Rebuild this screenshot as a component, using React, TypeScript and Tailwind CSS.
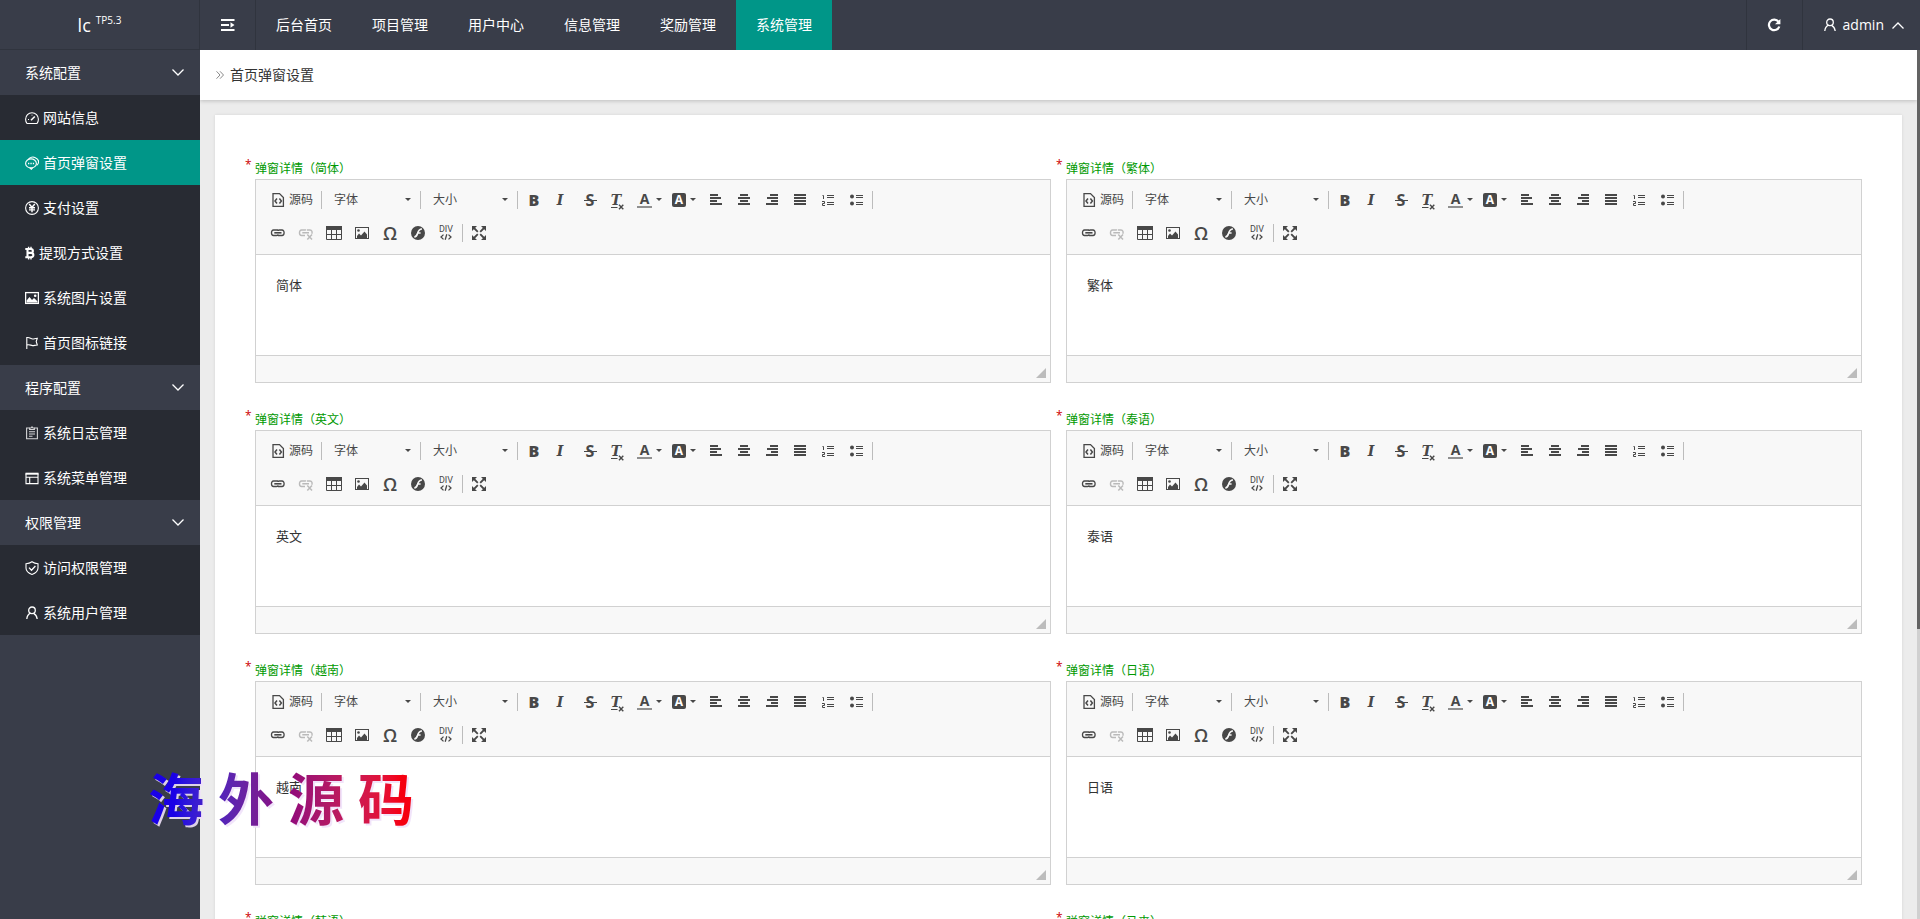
import React from "react";

type IconProps = { className?: string; viewBox?: string; children: React.ReactNode };

function Icon14({ className = "w-3.5", viewBox = "0 0 14 14", children }: IconProps) {
  return (
    <svg
      viewBox={viewBox}
      className={`h-3.5 shrink-0 ${className}`}
      fill="none"
      stroke="currentColor"
      strokeWidth="1.1"
      aria-hidden="true"
    >
      {children}
    </svg>
  );
}

function Icon16({ children }: { children: React.ReactNode }) {
  return (
    <svg viewBox="0 0 16 16" className="size-4 shrink-0" fill="none" stroke="currentColor" aria-hidden="true">
      {children}
    </svg>
  );
}

const icons = {
  gauge: (
    <Icon14>
      <path d="M2 12.5H12C13 11.300 13.400 9.700 13.400 8.200A6.400 6.400 0 0 0 .6 8.200C.6 9.700 1 11.300 2 12.500Z" />
      <path d="M6 9.300L9.800 5.500" strokeWidth="1.600" />
      <path d="M3 8.500H4M7 3.800V4.600" />
    </Icon14>
  ),
  chat: (
    <Icon14>
      <path d="M3.600 3.300C5 1.300 8 .6 10.300 1.700c2.600 1.200 3.800 3.600 2.900 5.700-.3.800-.8 1.400-1.500 1.800" />
      <ellipse cx="6" cy="7.400" rx="5.400" ry="4.500" />
      <path d="M4.500 11.700L6.300 13.300L7.800 11.700" />
      <path d="M3 7.500H4.300M5.400 7.500H6.700M7.800 7.500H9.100" strokeWidth="1.500" />
    </Icon14>
  ),
  yen: (
    <Icon14>
      <circle cx="7" cy="7" r="6.400" />
      <path d="M4.200 3L7 6.300L9.800 3M7 6.300V11.200M4 6.700H10M4 8.900H10" strokeWidth="1.400" />
    </Icon14>
  ),
  bitcoin: (
    <Icon14 className="w-2.5" viewBox="2 0 10 14">
      <path
        d="M4.500 3V11.200M2.300 3H7.800C10.600 3 10.600 6.900 7.800 6.900H4.500M7.800 6.900C11.200 6.900 11.200 11.200 8 11.200H2.300"
        strokeWidth="2.100"
      />
      <path d="M5.600 .8V3M8 .8V3M5.600 11V13.400M8 11V13.400" strokeWidth="1.400" />
    </Icon14>
  ),
  picture: (
    <Icon14>
      <rect x=".6" y="1.600" width="12.800" height="10.800" strokeWidth="1.300" />
      <path d="M1.600 11.600V9.500L4.500 6L7 9L9 7L12.400 10.200V11.600Z" fill="currentColor" stroke="none" />
      <circle cx="10.200" cy="4.700" r="1.300" fill="currentColor" stroke="none" />
    </Icon14>
  ),
  flag: (
    <Icon14>
      <path d="M1.800 1V13M1.800 1.700C4.500.8 6 3.400 8 3C9.700 2.700 10.800 2.300 12.300 2.300L11.200 5.500L12.300 9C10 9 9 9.800 7.500 9.600C5.500 9.300 4 8 1.800 9" />
    </Icon14>
  ),
  log: (
    <Icon14 className="w-3.5 opacity-80">
      <path d="M4.500 2H1.600V12.800H12.400V2H9.500" />
      <path d="M4.600 3.500V2H6L7 .8L8 2H9.400V3.500Z" />
      <path d="M4 5.800H10M4 8H10M4 10.200H7.500" />
    </Icon14>
  ),
  menu: (
    <Icon14>
      <path d="M1 2.500V12.600H13V2.500" />
      <path d="M.5 2.700H13.500" strokeWidth="2" />
      <path d="M1 6.200H13M4.700 6.200V12.600" />
    </Icon14>
  ),
  shield: (
    <Icon14>
      <path d="M7 .7C8.800 2 10.800 2.600 13 2.700V7C13 10 10.500 12.200 7 13.400C3.500 12.200 1 10 1 7V2.700C3.200 2.600 5.200 2 7 .7Z" />
      <path d="M4 6.600L6.500 9.200L10.400 5" strokeWidth="1.300" />
    </Icon14>
  ),
  user: (
    <Icon14>
      <circle cx="7" cy="4.300" r="3.300" strokeWidth="1.300" />
      <path d="M5.600 7.200C3.400 8.200 2 10.200 1.800 13M8.600 7.400C10.300 8.200 11.800 10.200 12.200 13" strokeWidth="1.300" />
    </Icon14>
  ),
};

type MenuGroup = { title: string; items: { label: string; icon: keyof typeof icons; active?: boolean }[] };

const groups: MenuGroup[] = [
  {
    title: "系统配置",
    items: [
      { label: "网站信息", icon: "gauge" },
      { label: "首页弹窗设置", icon: "chat", active: true },
      { label: "支付设置", icon: "yen" },
      { label: "提现方式设置", icon: "bitcoin" },
      { label: "系统图片设置", icon: "picture" },
      { label: "首页图标链接", icon: "flag" },
    ],
  },
  {
    title: "程序配置",
    items: [
      { label: "系统日志管理", icon: "log" },
      { label: "系统菜单管理", icon: "menu" },
    ],
  },
  {
    title: "权限管理",
    items: [
      { label: "访问权限管理", icon: "shield" },
      { label: "系统用户管理", icon: "user" },
    ],
  },
];

const navItems = ["后台首页", "项目管理", "用户中心", "信息管理", "奖励管理", "系统管理"];

const languages = ["简体", "繁体", "英文", "泰语", "越南", "日语", "韩语", "马来"];

function ToolButton({ title, children, disabled }: { title: string; children: React.ReactNode; disabled?: boolean }) {
  return (
    <button
      type="button"
      title={title}
      aria-label={title}
      disabled={disabled}
      className="flex h-6 w-7 shrink-0 items-center justify-center disabled:opacity-35"
    >
      {children}
    </button>
  );
}

function Caret() {
  return (
    <svg viewBox="0 0 6 3" className="h-[3px] w-1.5 shrink-0" fill="currentColor" aria-hidden="true">
      <path d="M0 0H6L3 3Z" />
    </svg>
  );
}

function Separator() {
  return <span className="h-[18px] w-px shrink-0 bg-[#bcbcbc]" />;
}

function Combo({ label, className }: { label: string; className: string }) {
  return (
    <div className={`relative flex h-6 shrink-0 items-center ${className}`}>
      <select aria-label={label} className="h-6 w-full appearance-none bg-transparent pl-3 text-xs outline-none">
        <option>{label}</option>
      </select>
      <span className="pointer-events-none absolute right-[9px] flex">
        <Caret />
      </span>
    </div>
  );
}

function Lines({ rows }: { rows: [number, number][] }) {
  return (
    <Icon16>
      {rows.map(([x, w], i) => (
        <rect key={i} x={x} y={2 + i * 3} width={w} height="2" fill="currentColor" stroke="none" />
      ))}
    </Icon16>
  );
}

function Toolbar() {
  return (
    <div className="overflow-hidden border-b border-[#d1d1d1] bg-[#f8f8f8] px-2 pt-[3px] pb-[5px] text-[#484848]">
      <div className="flex h-[33px] items-center">
        <button type="button" className="flex h-6 w-[57px] shrink-0 items-center gap-[3px] pl-1.5 text-xs">
          <Icon16>
            <path d="M3 1.600H9.500L13.400 5.500V14.400H3Z" strokeWidth="1.300" />
            <path d="M7 6.500L5 9L7 11.500M9.400 6.500L11.400 9L9.400 11.500" strokeWidth="1.500" />
          </Icon16>
          <span className="whitespace-nowrap">源码</span>
        </button>
        <Separator />
        <Combo label="字体" className="w-[98px]" />
        <Separator />
        <Combo label="大小" className="w-24" />
        <Separator />
        <span className="w-0.5 shrink-0" />
        <ToolButton title="加粗">
          <span className="font-['Open_Sans',sans-serif] text-base font-extrabold">B</span>
        </ToolButton>
        <ToolButton title="倾斜">
          <span className="pr-1 font-['DejaVu_Serif',serif] text-sm font-bold italic">I</span>
        </ToolButton>
        <ToolButton title="删除线">
          <span className="relative flex font-['Open_Sans',sans-serif] text-base font-bold">
            S
            <span className="absolute top-1/2 -left-0.5 h-px w-[13px] bg-[#484848]" />
          </span>
        </ToolButton>
        <ToolButton title="清除格式">
          <span className="relative flex pr-1 font-['DejaVu_Serif',serif] text-sm leading-4 font-bold italic">
            T
            <svg viewBox="0 0 13 6" className="absolute -bottom-0.5 left-0 h-1.5 w-[13px]" stroke="currentColor" fill="none" aria-hidden="true">
              <path d="M0 3.500H6.500" />
              <path d="M8 .8L12.300 5.200M12.300 .8L8 5.200" strokeWidth="1.400" />
            </svg>
          </span>
        </ToolButton>
        <button type="button" aria-label="文本颜色" className="flex h-6 w-[35px] shrink-0 items-center gap-1 pl-[5px]">
          <span className="flex h-4 w-[15px] flex-col items-center justify-between border-b-2 border-[#909090] font-['Open_Sans',sans-serif] text-sm leading-[14px] font-bold">
            A
          </span>
          <Caret />
        </button>
        <button type="button" aria-label="背景颜色" className="flex h-6 w-[35px] shrink-0 items-center gap-1 pl-[5px]">
          <span className="flex h-3.5 w-3.5 items-center justify-center rounded-xs bg-[#484848] font-['Open_Sans',sans-serif] text-xs font-bold text-white">
            A
          </span>
          <Caret />
        </button>
        <ToolButton title="左对齐">
          <Lines rows={[[2, 8], [2, 11], [2, 7], [2, 12]]} />
        </ToolButton>
        <ToolButton title="居中">
          <Lines rows={[[4, 8], [2, 12], [4, 8], [2, 12]]} />
        </ToolButton>
        <ToolButton title="右对齐">
          <Lines rows={[[6, 8], [3, 11], [7, 7], [2, 12]]} />
        </ToolButton>
        <ToolButton title="两端对齐">
          <Lines rows={[[2, 12], [2, 12], [2, 12], [2, 12]]} />
        </ToolButton>
        <ToolButton title="编号列表">
          <Icon16>
            <path d="M7 3.500H14M7 5.500H14M7 10.500H14M7 12.500H14" />
            <path d="M2.500 3.500H3.500V7M2 9.500H4.500V11.500H2.500V13.500H5" />
          </Icon16>
        </ToolButton>
        <ToolButton title="项目列表">
          <Icon16>
            <path d="M8 3.500H15M8 5.500H15M8 10.500H15M8 12.500H15" />
            <circle cx="4" cy="4.500" r="2" fill="currentColor" stroke="none" />
            <circle cx="4" cy="11.500" r="2" fill="currentColor" stroke="none" />
          </Icon16>
        </ToolButton>
        <span className="w-0.5 shrink-0" />
        <Separator />
      </div>
      <div className="flex h-[33px] items-center">
        <ToolButton title="超链接">
          <Icon16>
            <path d="M7.500 5.600V5H3.500C.8 5 .8 10.500 3.500 10.500H6.500C7.500 10.500 8 10 8 9.300M8.500 10V10.500H12C14.800 10.500 14.800 5 12 5H9.300C8.500 5 8 5.500 8 6" strokeWidth="1.300" />
            <path d="M4.300 7.800H11.500" strokeWidth="1.600" />
          </Icon16>
        </ToolButton>
        <ToolButton title="取消超链接" disabled>
          <Icon16>
            <path d="M7.500 5.600V5H3.500C.8 5 .8 10.500 3.500 10.500H7M9 5H12C14 5 14.500 7 13.800 8.700M4.300 7.800H11" strokeWidth="1.400" />
            <path d="M9.300 9.500L14 14.500M14 9.500L9.300 14.500" strokeWidth="1.500" />
          </Icon16>
        </ToolButton>
        <ToolButton title="表格">
          <Icon16>
            <path d="M.5 2.500H15.500V14.500H.5ZM5.500 4V14.500M10.500 4V14.500M.5 9.500H15.500" />
            <rect x="0" y="1" width="16" height="4" fill="currentColor" stroke="none" />
          </Icon16>
        </ToolButton>
        <ToolButton title="图像">
          <Icon16>
            <rect x="1.500" y="2.500" width="13" height="11" />
            <path d="M3 13V11L5 8.500L7 10.500L10.500 6.500L13 9.500V13Z" fill="currentColor" stroke="none" />
            <circle cx="4.500" cy="5.500" r="1.300" fill="currentColor" stroke="none" />
          </Icon16>
        </ToolButton>
        <ToolButton title="插入特殊符号">
          <span className="font-['Open_Sans',sans-serif] text-lg leading-6 font-semibold">Ω</span>
        </ToolButton>
        <ToolButton title="Flash">
          <Icon16>
            <circle cx="8" cy="8" r="7" fill="currentColor" stroke="none" />
            <path d="M12 4C8.800 3.900 8.300 6 7.500 8.500C6.900 10.600 6 11.800 4.300 12M7 8H10.600" stroke="#f8f8f8" strokeWidth="1.700" />
          </Icon16>
        </ToolButton>
        <ToolButton title="创建 DIV 容器">
          <span className="flex flex-col items-center font-['Roboto',sans-serif] text-[9px] leading-[9px]">
            DIV
            <svg viewBox="0 0 12 6" className="h-1.5 w-3" fill="none" stroke="currentColor" strokeWidth="1.300" aria-hidden="true">
              <path d="M3.500 .6L1 3L3.500 5.400M8.500 .6L11 3L8.500 5.400M6.800 .3L5.200 5.700" />
            </svg>
          </span>
        </ToolButton>
        <span className="w-0.5 shrink-0" />
        <Separator />
        <span className="w-0.5 shrink-0" />
        <ToolButton title="全屏">
          <Icon16>
            <path d="M1 1H6L1 6ZM15 1V6L10 1ZM1 15V10L6 15ZM15 15H10L15 10Z" fill="currentColor" stroke="none" />
            <path d="M3 3L6.800 6.800M13 3L9.200 6.800M3 13L6.800 9.200M13 13L9.200 9.200" strokeWidth="1.800" />
          </Icon16>
        </ToolButton>
      </div>
    </div>
  );
}

function EditorField({ language, index }: { language: string; index: number }) {
  const id = `popup-${index}`;
  return (
    <div className="relative min-w-0">
      <label htmlFor={id} className="block h-5 text-xs leading-5 text-[#090]">
        <span className="absolute -top-1 -left-2.5 text-[#c00]">*</span>
        弹窗详情（{language}）
      </label>
      <div className="border border-[#d1d1d1]">
        <Toolbar />
        <textarea
          id={id}
          defaultValue={language}
          className="block h-[100px] w-full resize-none bg-white px-5 py-5 text-[13px] leading-5 text-[#333] outline-none"
        />
        <div className="flex h-[27px] items-end justify-end border-t border-[#d1d1d1] bg-[#f8f8f8] p-1">
          <svg viewBox="0 0 10 10" className="size-2.5" fill="#bcbcbc" aria-hidden="true">
            <path d="M10 0V10H0Z" />
          </svg>
        </div>
      </div>
    </div>
  );
}

function Header() {
  return (
    <header className="flex h-[50px] shrink-0 bg-[#393d49] text-sm text-white">
      <a href="#home" className="flex w-[200px] shrink-0 items-center justify-center gap-[5px] border-r border-b border-[#30343e]">
        <span className="text-lg">lc</span>
        <sup className="text-[10px]">TP5.3</sup>
      </a>
      <button type="button" aria-label="收起菜单" className="flex w-14 shrink-0 items-center justify-center border-r border-[#30343e]">
        <svg viewBox="0 0 14 12" className="h-3 w-3.5" fill="none" stroke="currentColor" strokeWidth="2" aria-hidden="true">
          <path d="M0 1H13.500M0 6H8M0 11H13.500" />
          <path d="M9.500 3.300L13.500 6L9.500 8.700Z" fill="currentColor" stroke="none" />
        </svg>
      </button>
      <nav className="flex">
        {navItems.map((item) => (
          <a
            key={item}
            href="#nav"
            className={`flex items-center px-5 whitespace-nowrap ${item === "系统管理" ? "bg-[#009688]" : ""}`}
          >
            {item}
          </a>
        ))}
      </nav>
      <div className="ml-auto flex">
        <button type="button" aria-label="刷新" className="flex w-14 items-center justify-center border-l border-[#30343e]">
          <svg viewBox="0 0 14 14" className="size-3.5" fill="none" stroke="currentColor" strokeWidth="2.200" aria-hidden="true">
            <path d="M11.500 3.700A5.300 5.300 0 1 0 12.300 8.500" />
            <path d="M13.400 1V6.300H8Z" fill="currentColor" stroke="none" />
          </svg>
        </button>
        <button type="button" className="flex items-center gap-1.5 border-l border-[#30343e] pr-4 pl-5">
          {icons.user}
          <span>admin</span>
          <svg viewBox="0 0 12 7" className="ml-0.5 h-[7px] w-3" fill="none" stroke="currentColor" strokeWidth="1.300" aria-hidden="true">
            <path d="M.5 6.500L6 1L11.500 6.500" />
          </svg>
        </button>
      </div>
    </header>
  );
}

function Sidebar() {
  return (
    <aside className="w-[200px] shrink-0 overflow-hidden bg-[#393d49] text-sm text-white">
      {groups.map((group) => (
        <section key={group.title}>
          <button type="button" className="flex h-[45px] w-full items-center justify-between pr-4 pl-[25px]">
            {group.title}
            <svg viewBox="0 0 12 7" className="h-[7px] w-3" fill="none" stroke="currentColor" strokeWidth="1.300" aria-hidden="true">
              <path d="M.5 .5L6 6L11.500 .5" />
            </svg>
          </button>
          <ul className="bg-[#282b33]">
            {group.items.map((item) => (
              <li key={item.label}>
                <a
                  href="#menu"
                  className={`flex h-[45px] items-center gap-1 pl-[25px] ${item.active ? "bg-[#009688]" : ""}`}
                >
                  {icons[item.icon]}
                  {item.label}
                </a>
              </li>
            ))}
          </ul>
        </section>
      ))}
    </aside>
  );
}

export default function App() {
  return (
    <div className="relative flex h-screen flex-col overflow-hidden bg-[#ececec] font-['Open_Sans','Noto_Sans_CJK_SC',sans-serif]">
      <Header />
      <div className="flex min-h-0 flex-1">
        <Sidebar />
        <main className="min-w-0 flex-1 overflow-y-auto [scrollbar-width:none]">
          <div className="flex h-[50px] items-center gap-1.5 bg-white px-4 text-sm text-[#333] shadow-[0_1px_4px_rgba(0,0,0,0.2)]">
            <svg viewBox="0 0 8 8" className="size-2" fill="none" stroke="#888" aria-hidden="true">
              <path d="M.5 .3L4 4L.5 7.700M4 .3L7.500 4L4 7.700" />
            </svg>
            <h1>首页弹窗设置</h1>
          </div>
          <form className="m-[15px] grid grid-cols-2 gap-x-[15px] gap-y-[27px] bg-white px-10 pt-11 pb-20 shadow-[0_0_3px_rgba(0,0,0,0.1)]">
            {languages.map((language, index) => (
              <EditorField key={language} language={language} index={index} />
            ))}
          </form>
        </main>
        <div className="w-[3px] shrink-0 bg-[#d0d0d0]">
          <div className="h-2/3 bg-[#636363]" />
        </div>
      </div>
      <div className="pointer-events-none absolute top-[758px] left-[148px] drop-shadow-[2px_2px_0_rgba(240,225,250,0.9)]">
        <div className="flex gap-3.5 bg-linear-to-r from-[#1a00e6] from-10% via-[#8a0080] via-50% to-[#f50010] to-95% bg-clip-text text-[56px] leading-[80px] font-bold text-transparent">
          <span>海</span>
          <span>外</span>
          <span>源</span>
          <span>码</span>
        </div>
      </div>
    </div>
  );
}
